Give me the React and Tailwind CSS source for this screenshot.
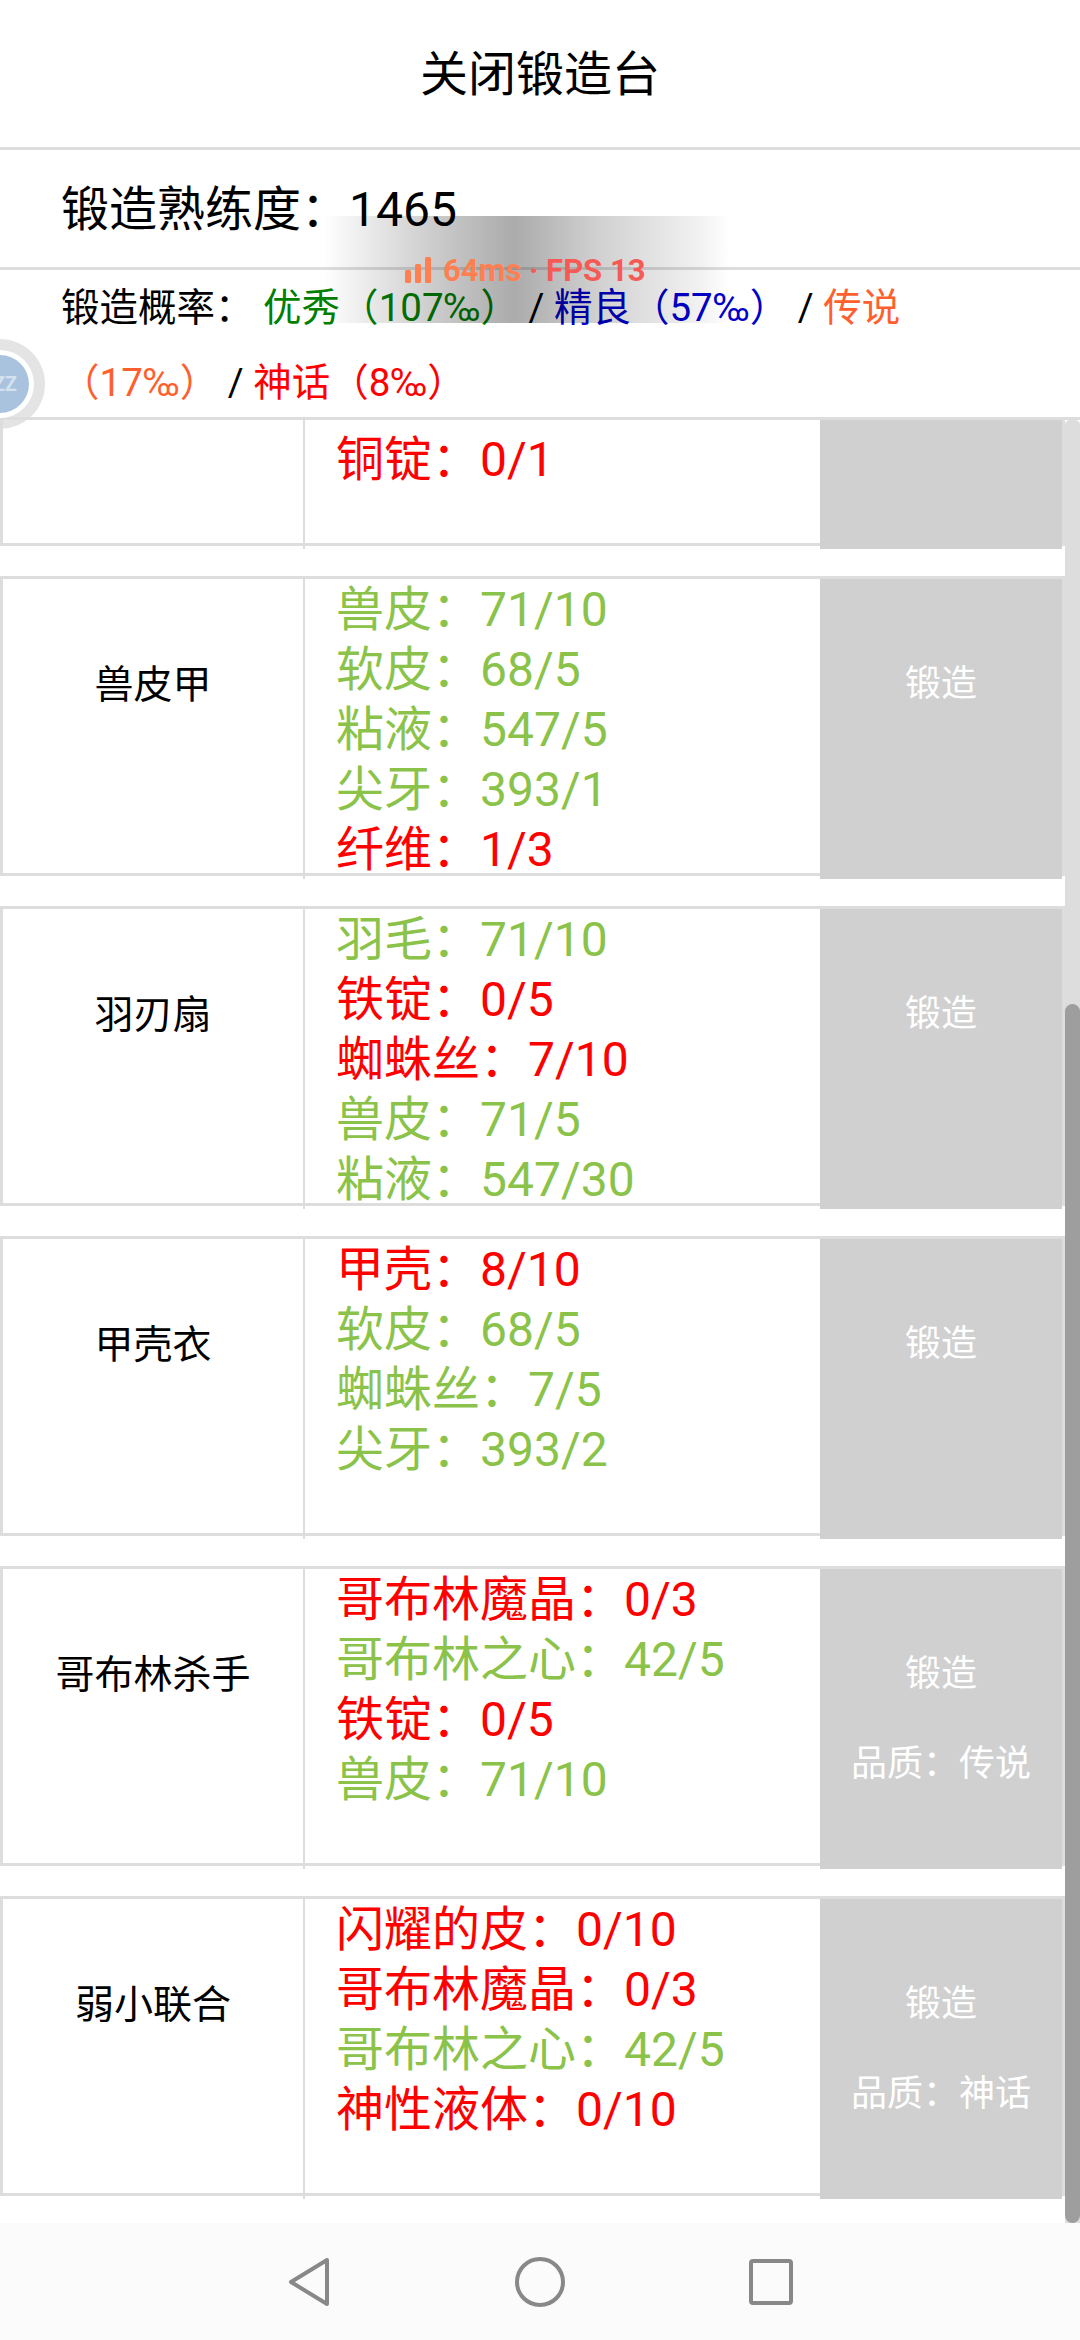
import React from 'react'

const GREEN = 'text-[#8bc34a]'
const RED = 'text-[#ff0000]'

// full-width punctuation, as the game text uses it
const COLON = '\uFF1A'
const LP = '\uFF08'
const RP = '\uFF09'

const recipes = [
  {
    name: '兽皮甲',
    items: [['兽皮', 71, 10], ['软皮', 68, 5], ['粘液', 547, 5], ['尖牙', 393, 1], ['纤维', 1, 3]],
  },
  {
    name: '羽刃扇',
    items: [['羽毛', 71, 10], ['铁锭', 0, 5], ['蜘蛛丝', 7, 10], ['兽皮', 71, 5], ['粘液', 547, 30]],
  },
  {
    name: '甲壳衣',
    items: [['甲壳', 8, 10], ['软皮', 68, 5], ['蜘蛛丝', 7, 5], ['尖牙', 393, 2]],
  },
  {
    name: '哥布林杀手',
    quality: '传说',
    items: [['哥布林魔晶', 0, 3], ['哥布林之心', 42, 5], ['铁锭', 0, 5], ['兽皮', 71, 10]],
  },
  {
    name: '弱小联合',
    quality: '神话',
    items: [['闪耀的皮', 0, 10], ['哥布林魔晶', 0, 3], ['哥布林之心', 42, 5], ['神性液体', 0, 10]],
  },
]

function Material({ item }) {
  const [label, have, need] = item
  return (
    <p className={`h-[60px] text-[48px] leading-[62px] whitespace-nowrap ${have >= need ? GREEN : RED}`}>
      {label}{COLON}{have}/{need}
    </p>
  )
}

function RecipeRow({ recipe }) {
  return (
    <div className="flex items-start h-[300px] mb-[30px] border-[3px] border-[#dddddd] bg-white">
      <div className="w-[300px] pt-[61px] text-center text-[39px] leading-[90px] text-black">{recipe.name}</div>
      <div className="w-[517px] h-[300px] shrink-0 border-l-2 border-[#dddddd] pl-[31px]">
        {recipe.items.map((item) => (
          <Material key={item[0]} item={item} />
        ))}
      </div>
      <div className="w-[242px] h-[300px] shrink-0 bg-[#d0d0d0] pt-[60px] text-center text-[36px] leading-[90px] text-white">
        <p>锻造</p>
        {recipe.quality && <p>品质{COLON}{recipe.quality}</p>}
      </div>
    </div>
  )
}

function App() {
  return (
    <div
      className="relative flex flex-col w-[1080px] h-[2340px] overflow-hidden bg-white"
      style={{ fontFamily: 'Roboto, "Noto Sans CJK SC", sans-serif' }}
    >
      <div className="flex items-center justify-center h-[150px] pt-[2px] shrink-0 border-b-[3px] border-[#dddddd] text-[48px] text-black">
        关闭锻造台
      </div>

      <div className="flex items-center h-[120px] pt-[3px] shrink-0 border-b-[3px] border-[#dddddd] pl-[61px] text-[48px] text-black">
        锻造熟练度{COLON}1465
      </div>

      <div className="h-[150px] shrink-0 border-b-[3px] border-[#dddddd] pl-[61px] pr-[62px] text-[38.5px] leading-[75px] text-black">
        锻造概率{COLON} <span className="text-[#008000]">优秀{LP}107‰{RP}</span> / <span className="text-[#0000cd]">精良{LP}57‰{RP}</span> / <span className="text-[#ff5f2e]">传说{LP}17‰{RP}</span> / <span className="text-[#ff0000]">神话{LP}8‰{RP}</span>
      </div>

      {/* Scrolled list */}
      <div className="flex flex-1 min-h-0">
        <div className="w-[1065px] shrink-0 overflow-hidden">
          {/* last lines of the row scrolled off the top */}
          <div className="flex items-start h-[126px] mb-[30px] border-[3px] border-t-0 border-[#dddddd] bg-white">
            <div className="w-[300px]" />
            <div className="w-[517px] h-[129px] shrink-0 border-l-2 border-[#dddddd] pl-[31px] pt-[9px]">
              <Material item={['铜锭', 0, 1]} />
            </div>
            <div className="w-[242px] h-[129px] shrink-0 bg-[#d0d0d0]" />
          </div>
          {recipes.map((recipe) => (
            <RecipeRow key={recipe.name} recipe={recipe} />
          ))}
        </div>
        <div className="flex flex-col justify-end w-[15px] rounded-t-[5px] bg-[#dddddd]">
          <div className="h-[1219px] rounded-full bg-[#9e9e9e]" />
        </div>
      </div>

      {/* Navigation bar */}
      <div className="flex items-center justify-center gap-[181px] h-[117px] shrink-0 bg-[#fbfbfb]">
        <svg width="50" height="50" viewBox="0 0 50 50" fill="none" stroke="#888888" strokeWidth="4" strokeLinejoin="round">
          <path d="M43 3 L7 25 L43 47 Z" />
        </svg>
        <svg width="50" height="50" viewBox="0 0 50 50" fill="none" stroke="#888888" strokeWidth="4">
          <circle cx="25" cy="25" r="23" />
        </svg>
        <svg width="50" height="50" viewBox="0 0 50 50" fill="none" stroke="#888888" strokeWidth="4" strokeLinejoin="round">
          <rect x="5" y="4" width="40" height="42" rx="2" />
        </svg>
      </div>

      {/* Floating performance overlay */}
      <div className="absolute left-[323px] top-[216px] w-[407px] h-[107px] bg-[linear-gradient(90deg,rgba(0,0,0,0)_0%,rgba(0,0,0,0.2)_27%,rgba(0,0,0,0.33)_47%,rgba(0,0,0,0.18)_68%,rgba(0,0,0,0.05)_93%,rgba(0,0,0,0)_100%)]" />
      <div className="absolute left-[405px] top-[255px] flex items-center h-[32px] text-[31px] font-bold leading-[32px] whitespace-nowrap">
        <svg width="26" height="26" viewBox="0 0 26 26" className="mr-[12px] mb-[3px]" fill="#ff7f50">
          <rect x="0" y="13" width="6" height="13" rx="1.5" />
          <rect x="10" y="7" width="6" height="19" rx="1.5" />
          <rect x="20" y="0" width="6" height="26" rx="1.5" />
        </svg>
        <span className="text-[#ff7f50]">64ms</span>
        <span className="text-[#f55a55]">&nbsp;·&nbsp;FPS 13</span>
      </div>

      {/* Floating assistant ball, half off the screen */}
      <div className="absolute left-[-45px] top-[339px] flex items-center justify-center w-[90px] h-[90px] rounded-full bg-[#dddddd]/80">
        <div className="flex items-center justify-center w-[68px] h-[68px] rounded-full bg-white">
          <div className="flex items-center justify-end w-[58px] h-[58px] rounded-full bg-[#a9c3de] pr-[12px] text-[20px] font-bold leading-none text-white/50">
            <span>ZZ</span>
          </div>
        </div>
      </div>
    </div>
  )
}

export default App
